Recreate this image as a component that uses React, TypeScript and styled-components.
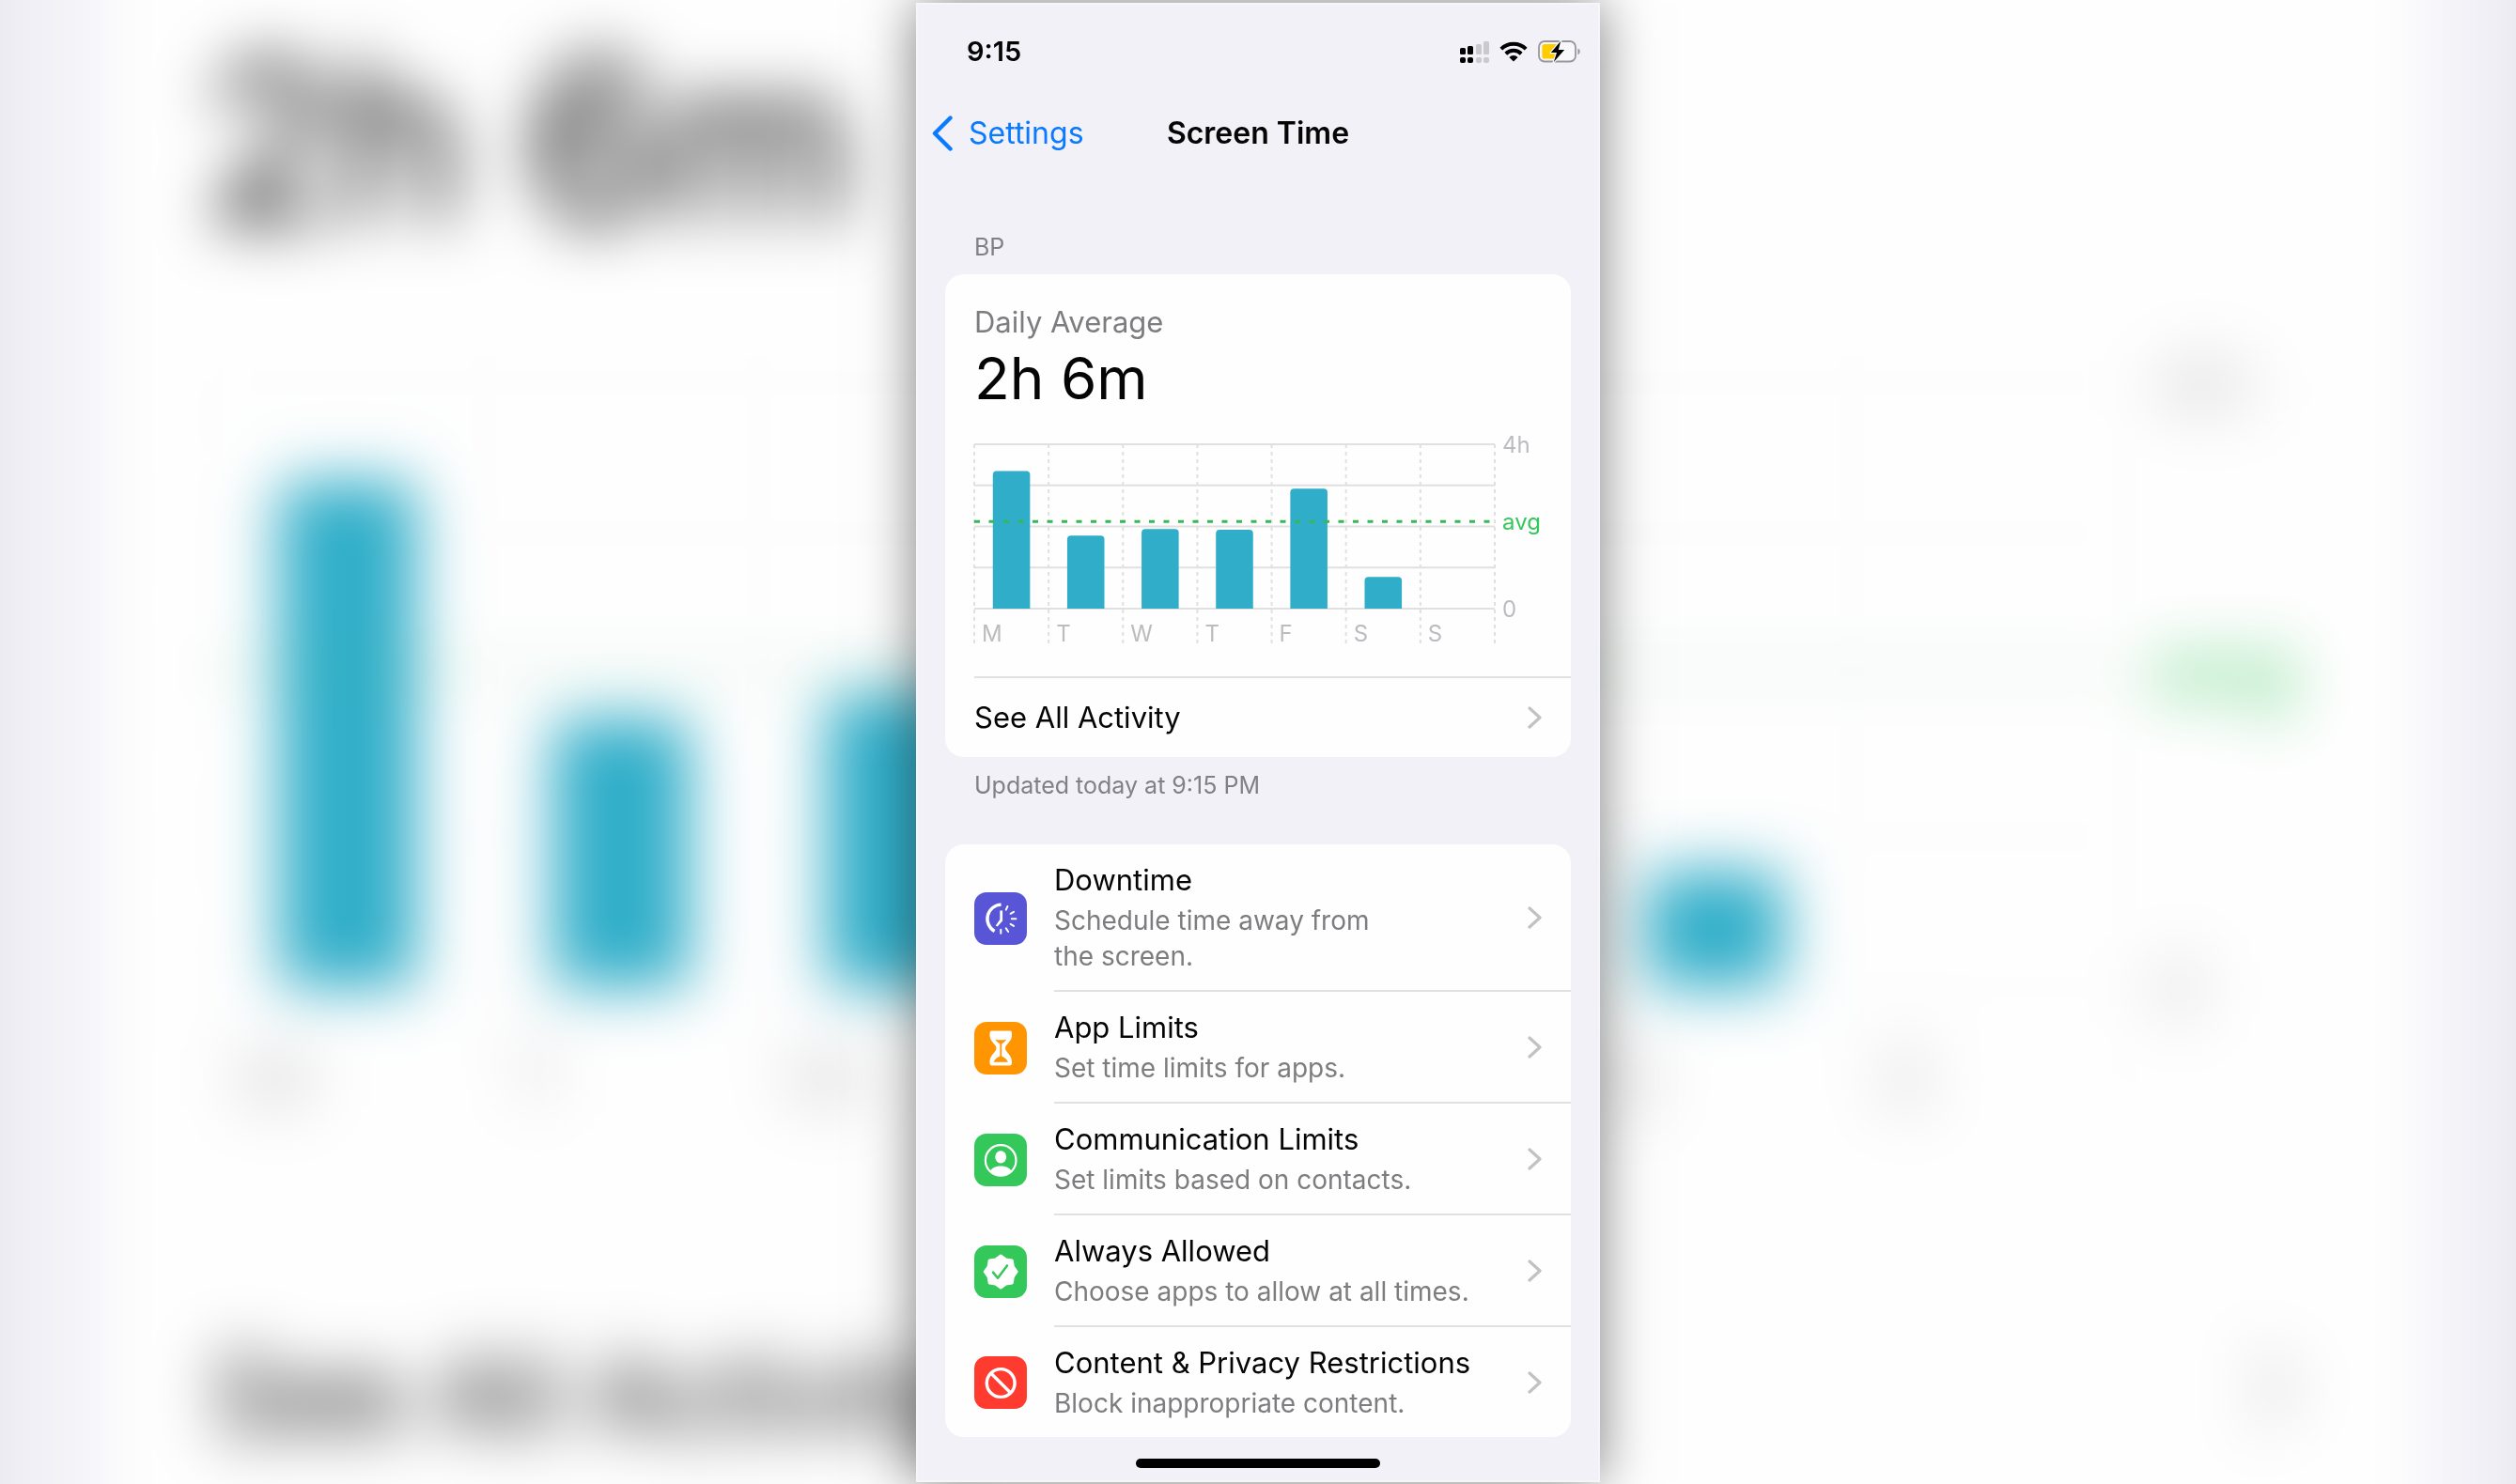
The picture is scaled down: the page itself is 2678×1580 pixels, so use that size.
import React from "react";
import styled, { createGlobalStyle } from "styled-components";

const FONT = 'Inter, "Liberation Sans", sans-serif';

const color = {
  screen: "#f2f1f7",
  card: "#fefefe",
  text: "#050505",
  secondary: "#7d7d80",
  header: "#808086",
  faint: "#bcbcc0",
  divider: "#e1e1e5",
  grid: "#e0e0e1",
  teal: "#30aec9",
  green: "#34c759",
  blue: "#0a7aff",
};

const GlobalStyle = createGlobalStyle`
  *, *::before, *::after { box-sizing: border-box; }
  html, body { margin: 0; padding: 0; }
  body { font-family: ${FONT}; color: ${color.text}; background: ${color.card}; }
  h1, h2, p, ul { margin: 0; padding: 0; font-weight: 400; }
  ul { list-style: none; }
  a { color: inherit; text-decoration: none; }
  svg { display: block; flex: none; }
`;

/* ---------- data ---------- */

const week = [
  { day: "M", hours: 3.35 },
  { day: "T", hours: 1.78 },
  { day: "W", hours: 1.94 },
  { day: "T", hours: 1.92 },
  { day: "F", hours: 2.92 },
  { day: "S", hours: 0.77 },
  { day: "S", hours: 0 },
];
const averageHours = 2.12;
const maxHours = 4;

/* ---------- chart ---------- */

const plot = { width: 554, top: 20, height: 175, tail: 38 };

type WeekChartProps = {
  /** Pale lines, for the backdrop. */
  soft?: boolean;
  /** Columns whose day letter is left out. */
  unlabelled?: number[];
};

function WeekChart({ soft = false, unlabelled = [] }: WeekChartProps) {
  const column = plot.width / week.length;
  const base = plot.top + plot.height;
  const yOf = (h: number) => base - (h / maxHours) * plot.height;
  const label = { fontFamily: FONT, fontSize: 24 };
  const grid = soft ? "#f8f8f9" : color.grid;
  return (
    <g>
      {[0, 1, 2, 3, 4].map((h) => (
        <line key={h} x1={0} x2={plot.width} y1={yOf(h)} y2={yOf(h)} stroke={grid} strokeWidth={2} />
      ))}
      {[0, 1, 2, 3, 4, 5, 6, 7].map((i) => (
        <line
          key={i}
          x1={i * column}
          x2={i * column}
          y1={plot.top}
          y2={base + plot.tail}
          stroke={grid}
          strokeWidth={2}
          strokeDasharray="4 4"
        />
      ))}
      {week.map(({ hours }, i) => {
        if (!hours) return null;
        const x = i * column + column / 4;
        const w = column / 2;
        const y = yOf(hours);
        return (
          <path
            key={i}
            fill={color.teal}
            d={`M${x} ${base}V${y + 4}q0 -4 4 -4H${x + w - 4}q4 0 4 4V${base}Z`}
          />
        );
      })}
      <line
        x1={0}
        x2={plot.width}
        y1={yOf(averageHours)}
        y2={yOf(averageHours)}
        stroke="#34b956"
        strokeOpacity={soft ? 0.45 : 1}
        strokeWidth={3}
        strokeDasharray="6 9.5"
      />
      {week.map(({ day }, i) =>
        unlabelled.includes(i) ? null : (
          <text key={i} x={i * column + 8} y={base + 35} fill={color.faint} {...label}>
            {day}
          </text>
        )
      )}
      <text x={plot.width + 8} y={plot.top + 9} fill={color.faint} {...label}>4h</text>
      <text x={plot.width + 8} y={yOf(averageHours) + 9} fill={color.green} {...label}>avg</text>
      <text x={plot.width + 8} y={base + 9} fill={color.faint} {...label}>0</text>
    </g>
  );
}

/* ---------- blurred backdrop ---------- */

const BackdropArt = styled.svg`
  position: fixed;
  inset: 0;
  z-index: -1;
  width: 100%;
  height: 100%;
`;

function Backdrop() {
  return (
    <BackdropArt viewBox="0 359 728 430" preserveAspectRatio="xMidYMid slice" aria-hidden="true">
      <defs>
        <filter id="haze" filterUnits="userSpaceOnUse" x={-60} y={300} width={850} height={550} colorInterpolationFilters="sRGB">
          <feGaussianBlur stdDeviation={9} />
        </filter>
      </defs>
      <g filter="url(#haze)" fontFamily={FONT}>
        <rect x={-60} y={290} width={850} height={570} fill={color.screen} />
        <rect x={-60} y={290} width={58} height={570} fill="#e2e2e8" />
        <rect x={730} y={290} width={60} height={570} fill="#e2e2e8" />
        <rect x={29} y={290} width={673} height={570} fill={color.card} />
        <text x={59} y={423} fontSize={63} fill={color.text}>2h 6m</text>
        <g transform="translate(61 450)">
          <WeekChart soft unlabelled={[3, 4]} />
        </g>
        <text x={61} y={774} fontSize={31} fill={color.text}>See All Activity</text>
        <path d="M652 750l11 11l-11 11" fill="none" stroke={color.faint} strokeWidth={3} />
      </g>
    </BackdropArt>
  );
}

/* ---------- layout ---------- */

const Page = styled.div`
  display: flex;
  justify-content: center;
  min-height: 100vh;
  padding: 3px 0 2px;
`;

const Phone = styled.main`
  display: flex;
  flex-direction: column;
  width: 100%;
  max-width: 728px;
  padding-bottom: 15px;
  background: ${color.screen};
  box-shadow: 0 0 56px rgba(0, 0, 0, 0.5), inset 0 0 0 2px #f6f6fa;
`;

const StatusBar = styled.div`
  display: flex;
  align-items: center;
  justify-content: space-between;
  height: 104px;
  padding: 0 20px 0 54px;
`;

const Clock = styled.time`
  font-size: 29px;
  font-weight: 600;
  line-height: 32px;
`;

const StatusIcons = styled.div`
  display: flex;
  align-items: center;
  gap: 11px;
`;

const NavBar = styled.nav`
  display: grid;
  grid-template-columns: 1fr auto 1fr;
  align-items: center;
  height: 70px;
  padding: 0 17px;
`;

const BackLink = styled.a`
  display: flex;
  align-items: center;
  gap: 17px;
  color: ${color.blue};
  font-size: 32px;
  line-height: 40px;
`;

const NavTitle = styled.h1`
  && {
    font-size: 32px;
    font-weight: 600;
    line-height: 40px;
  }
`;

const Section = styled.section`
  padding: 0 31px;
`;

const SectionLabel = styled.h2`
  && {
    padding: 70px 31px 13px;
  }
  color: ${color.header};
  font-size: 25px;
  line-height: 32px;
`;

const SectionNote = styled.p`
  && {
    padding: 14px 31px 47px;
  }
  color: ${color.header};
  font-size: 25px;
  line-height: 32px;
`;

const Card = styled.div`
  overflow: hidden;
  border-radius: 20px;
  background: ${color.card};
`;

const Summary = styled.div`
  padding: 31px 0 0 31px;
`;

const SummaryLabel = styled.p`
  color: ${color.secondary};
  font-size: 31px;
  line-height: 40px;
`;

const SummaryValue = styled.p`
  font-size: 62px;
  line-height: 80px;
`;

const ChartArt = styled.svg`
  width: 100%;
  height: auto;
  margin: 10px 0 30px;
  overflow: visible;
`;

const ActivityLink = styled.a`
  display: flex;
  align-items: center;
  justify-content: space-between;
  height: 86px;
  padding-right: 31px;
  border-top: 2px solid ${color.divider};
  font-size: 31px;
  line-height: 40px;
`;

const RowLink = styled.a`
  display: flex;
  align-items: center;
  gap: 29px;
  padding-left: 31px;
`;

const RowBody = styled.span<{ $last: boolean }>`
  display: flex;
  flex: 1;
  align-items: center;
  justify-content: space-between;
  padding: 18px 31px 17px 0;
  border-bottom: ${(p) => (p.$last ? "0" : `2px solid ${color.divider}`)};
`;

const RowText = styled.span`
  display: flex;
  flex-direction: column;
  gap: 4px;
`;

const RowTitle = styled.span`
  font-size: 31px;
  line-height: 40px;
`;

const RowDetail = styled.span`
  color: ${color.secondary};
  font-size: 28px;
  line-height: 38px;
`;

const Tile = styled.svg<{ $fill: string }>`
  width: 56px;
  height: 56px;
  border-radius: 13px;
  background: ${(p) => p.$fill};
`;

const HomeIndicator = styled.div`
  width: 260px;
  height: 10px;
  margin: 23px auto 0;
  border-radius: 5px;
  background: #000;
`;

/* ---------- icons ---------- */

function Chevron() {
  return (
    <svg width="15" height="24" viewBox="0 0 15 24" aria-hidden="true">
      <path d="M2 2l11 10L2 22" fill="none" stroke="#c2c2c5" strokeWidth="3.2" strokeLinecap="round" strokeLinejoin="round" />
    </svg>
  );
}

function BackChevron() {
  return (
    <svg width="22" height="38" viewBox="0 0 22 38" aria-hidden="true">
      <path d="M19.5 2.5L3 19l16.5 16.5" fill="none" stroke={color.blue} strokeWidth="4.4" strokeLinecap="round" strokeLinejoin="round" />
    </svg>
  );
}

function SignalIcon() {
  const bars = [
    { x: 0, y: 7, on: true },
    { x: 8, y: 5, on: true },
    { x: 17, y: 3, on: false },
    { x: 25, y: 0, on: false },
  ];
  return (
    <svg width="31" height="23" viewBox="0 0 31 23" role="img" aria-label="Signal">
      {bars.map(({ x, y, on }) => (
        <g key={x} fill={on ? "#000" : "#c9c9ce"}>
          <rect x={x} y={y} width="6" height={14 - y} rx="1.5" />
          <rect x={x} y="17" width="6" height="6" rx="2" />
        </g>
      ))}
    </svg>
  );
}

function WifiIcon() {
  return (
    <svg width="30" height="22" viewBox="0 0 30 22" role="img" aria-label="Wi-Fi">
      <g fill="none" stroke="#000" strokeWidth="4">
        <path d="M1.8 8.2a18.8 18.8 0 0 1 26.4 0" />
        <path d="M6.8 13.2a11.7 11.7 0 0 1 16.4 0" />
      </g>
      <path d="M15 21.6l-4.6-4.7a6.6 6.6 0 0 1 9.2 0Z" />
    </svg>
  );
}

function BatteryIcon() {
  return (
    <svg width="46" height="24" viewBox="0 0 46 24" role="img" aria-label="Battery charging">
      <rect x="1" y="1" width="39" height="21.5" rx="6" fill="#f8f8fb" stroke="#97979c" strokeWidth="1.8" />
      <path d="M7 4H21V19.5H7a2.6 2.6 0 0 1-2.6-2.6V6.6A2.6 2.6 0 0 1 7 4Z" fill="#fc0" />
      <path d="M42.4 8.4q2.4 1 2.4 3.4t-2.4 3.4Z" fill="#97979c" />
      <path
        d="M24.2 .8L13.8 13H20L16.8 23L28.2 10H21.8Z"
        fill="#000"
        stroke="#f8f8fb"
        strokeWidth="2.4"
        strokeLinejoin="round"
        paintOrder="stroke"
      />
    </svg>
  );
}

function DowntimeIcon() {
  return (
    <Tile $fill="#5856d6" viewBox="0 0 56 56" aria-hidden="true">
      <path d="M28.6 13.1A15.2 15.2 0 0 0 21.6 41.5" fill="none" stroke="#fff" strokeWidth="3.4" />
      <path d="M27.3 19.5h2.8v11L24.6 36.6l-1.8-1.2L27.3 29Z" fill="#fff" />
      <path
        d="M35.4 15L33.8 18.6M42 20.8L38.6 22.8M44.4 28.3H39.8M42 35.9L38.6 33.8M36.2 42L33.8 38.4M28.3 43.8V39.8"
        stroke="#fff"
        strokeWidth="2"
        strokeLinecap="round"
      />
    </Tile>
  );
}

function HourglassIcon() {
  return (
    <Tile $fill="#ff9500" viewBox="0 0 56 56" aria-hidden="true">
      <path
        d="M18.5 9.6H38Q40 9.6 40 12V14.5C40 21 33 24 33 28S40 35.5 40 42V44Q40 46.4 38 46.4H18.5Q16.5 46.4 16.5 44V42C16.5 35.5 23.5 32 23.5 28S16.5 21 16.5 14.5V12Q16.5 9.6 18.5 9.6Z"
        fill="#fff"
      />
      <path
        d="M22.3 18.8Q28.3 19.8 34.2 18.8Q32.5 21.6 29.2 23.5V36.5Q34 38.5 36 42.8H20.5Q22.5 38.5 27.4 36.5V23.5Q24 21.6 22.3 18.8Z"
        fill="#ff9500"
      />
    </Tile>
  );
}

function PersonIcon() {
  return (
    <Tile $fill="#34c759" viewBox="0 0 56 56" aria-hidden="true">
      <circle cx="28.2" cy="28.4" r="16.3" fill="none" stroke="#fff" strokeWidth="2.2" />
      <ellipse cx="28.2" cy="24.8" rx="6" ry="6.6" fill="#fff" />
      <path d="M16.5 40C19 36 23.5 34.4 28.2 34.4S37.4 36 40 40A16.4 16.4 0 0 1 16.5 40Z" fill="#fff" />
    </Tile>
  );
}

function SealIcon() {
  const points = Array.from({ length: 16 }, (_, i) => {
    const r = i % 2 ? 14.2 : 17;
    const a = (i * Math.PI) / 8;
    return `${28.2 + r * Math.cos(a)},${28 + r * Math.sin(a)}`;
  }).join(" ");
  return (
    <Tile $fill="#34c759" viewBox="0 0 56 56" aria-hidden="true">
      <polygon points={points} fill="#fff" stroke="#fff" strokeWidth="3" strokeLinejoin="round" />
      <path d="M20 28.6L25 34.8L35 21.4" fill="none" stroke="#34c759" strokeWidth="2.5" strokeLinecap="round" strokeLinejoin="round" />
    </Tile>
  );
}

function BlockIcon() {
  return (
    <Tile $fill="#ff3b30" viewBox="0 0 56 56" aria-hidden="true">
      <g fill="none" stroke="#fff" strokeWidth="3.4">
        <circle cx="28.2" cy="28.5" r="14.9" />
        <path d="M17.7 18L38.7 39" />
      </g>
    </Tile>
  );
}

/* ---------- screen ---------- */

const options = [
  {
    id: "downtime",
    title: "Downtime",
    detail: (
      <>
        Schedule time away from
        <br />
        the screen.
      </>
    ),
    Icon: DowntimeIcon,
  },
  { id: "app-limits", title: "App Limits", detail: "Set time limits for apps.", Icon: HourglassIcon },
  { id: "communication", title: "Communication Limits", detail: "Set limits based on contacts.", Icon: PersonIcon },
  { id: "always-allowed", title: "Always Allowed", detail: "Choose apps to allow at all times.", Icon: SealIcon },
  { id: "restrictions", title: "Content & Privacy Restrictions", detail: "Block inappropriate content.", Icon: BlockIcon },
];

export default function App() {
  return (
    <>
      <GlobalStyle />
      <Backdrop />
      <Page>
        <Phone>
          <StatusBar>
            <Clock>9:15</Clock>
            <StatusIcons>
              <SignalIcon />
              <WifiIcon />
              <BatteryIcon />
            </StatusIcons>
          </StatusBar>
          <NavBar>
            <BackLink href="#settings">
              <BackChevron />
              Settings
            </BackLink>
            <NavTitle>Screen Time</NavTitle>
          </NavBar>

          <Section>
            <SectionLabel>BP</SectionLabel>
            <Card>
              <Summary>
                <SummaryLabel>Daily Average</SummaryLabel>
                <SummaryValue>2h 6m</SummaryValue>
                <ChartArt viewBox="0 0 635 237" role="img" aria-label="Screen time per day this week">
                  <WeekChart />
                </ChartArt>
                <ActivityLink href="#activity">
                  See All Activity
                  <Chevron />
                </ActivityLink>
              </Summary>
            </Card>
            <SectionNote>Updated today at 9:15 PM</SectionNote>
          </Section>

          <Section>
            <Card as="ul">
              {options.map(({ id, title, detail, Icon }, i) => (
                <li key={id}>
                  <RowLink href={`#${id}`}>
                    <Icon />
                    <RowBody $last={i === options.length - 1}>
                      <RowText>
                        <RowTitle>{title}</RowTitle>
                        <RowDetail>{detail}</RowDetail>
                      </RowText>
                      <Chevron />
                    </RowBody>
                  </RowLink>
                </li>
              ))}
            </Card>
          </Section>
          <HomeIndicator />
        </Phone>
      </Page>
    </>
  );
}
